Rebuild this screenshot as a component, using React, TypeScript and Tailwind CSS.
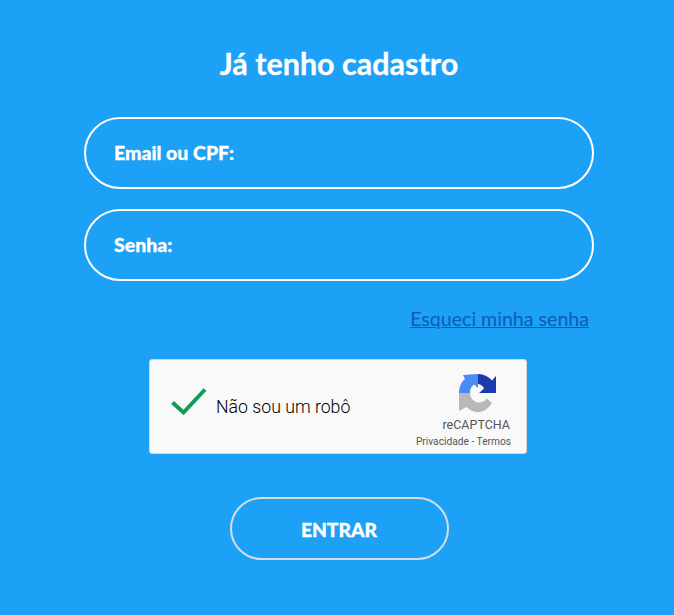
export default function App() {
  const label = "text-white font-black text-[19.5px] leading-none [-webkit-text-stroke:0.3px_white]";
  return (
    <div className="w-[674px] h-[615px] bg-[#1da1f6] flex flex-col items-center pt-[47px] pl-[4px] font-['Lato',sans-serif] overflow-hidden">
      <h1 className="text-white text-[30.5px] leading-[32px] font-bold text-center [-webkit-text-stroke:0.3px_white]">Já tenho cadastro</h1>
      <div className="mt-[38px] w-[510px] flex flex-col gap-[20px]">
        <div className="h-[72px] rounded-full border-2 border-white flex items-center pl-[28px]">
          <span className={label}>Email ou CPF:</span>
        </div>
        <div className="h-[72px] rounded-full border-2 border-white flex items-center pl-[28px]">
          <span className={label}>Senha:</span>
        </div>
      </div>
      <div className="w-[510px] flex justify-end pr-[5px] mt-[27px]">
        <a href="#" className="text-[#0d5cb5] text-[19.6px] leading-[22px] underline">Esqueci minha senha</a>
      </div>
      <div className="mt-[29px] mr-[2px] w-[378px] h-[95px] bg-[#f9f9f9] border border-[#d6d6d6] rounded-[3px] flex items-center pl-[20px] pr-[15px] font-['Roboto',sans-serif]">
        <svg width="38" height="30" viewBox="0 0 38 30" className="shrink-0 mt-[-10px]">
          <path d="M2.5 15.5 L13.5 25.5 L35 2.5" fill="none" stroke="#0f9d58" strokeWidth="4" />
        </svg>
        <span className="ml-[8px] text-[17.7px] leading-[22px] text-black font-light">Não sou um robô</span>
        <div className="ml-auto flex flex-col items-end mt-[7px]">
          <svg width="40" height="40" viewBox="0 0 40 40" className="mr-[12px]">
            <path d="M0 20 C0 14 2 9 6 6 L4 2 L19 1 L19 15 L15 11.5 C12.5 13 11 16 11 20 Z" fill="#4a8af4" />
            <path d="M19 1 C25 1 30 4 33 7.5 L37 3 L37 20 L20 20 L25 15.5 C24 13 22 11.5 19 11 Z" fill="#1c3aa9" />
            <path d="M0 20 L11 20 C11 25 15 29.5 20 29.5 C23 29.5 26 28 28 25.5 L33 30 C29 35.5 25 39 20 39 C14 39 10.5 37 7.5 34 L0 38 Z" fill="#b8b8b8" />
          </svg>
          <div className="text-[12.5px] leading-[14px] text-[#555] mt-[5px] mr-[1px]">reCAPTCHA</div>
          <div className="text-[10.2px] leading-[12px] text-[#555] mt-[4px] whitespace-nowrap">Privacidade - Termos</div>
        </div>
      </div>
      <button className="mt-[43px] w-[219px] h-[63px] pt-[3px] rounded-full border-2 border-[#d4dde3] text-white font-black text-[19.3px] [-webkit-text-stroke:0.3px_white]">ENTRAR</button>
    </div>
  );
}
